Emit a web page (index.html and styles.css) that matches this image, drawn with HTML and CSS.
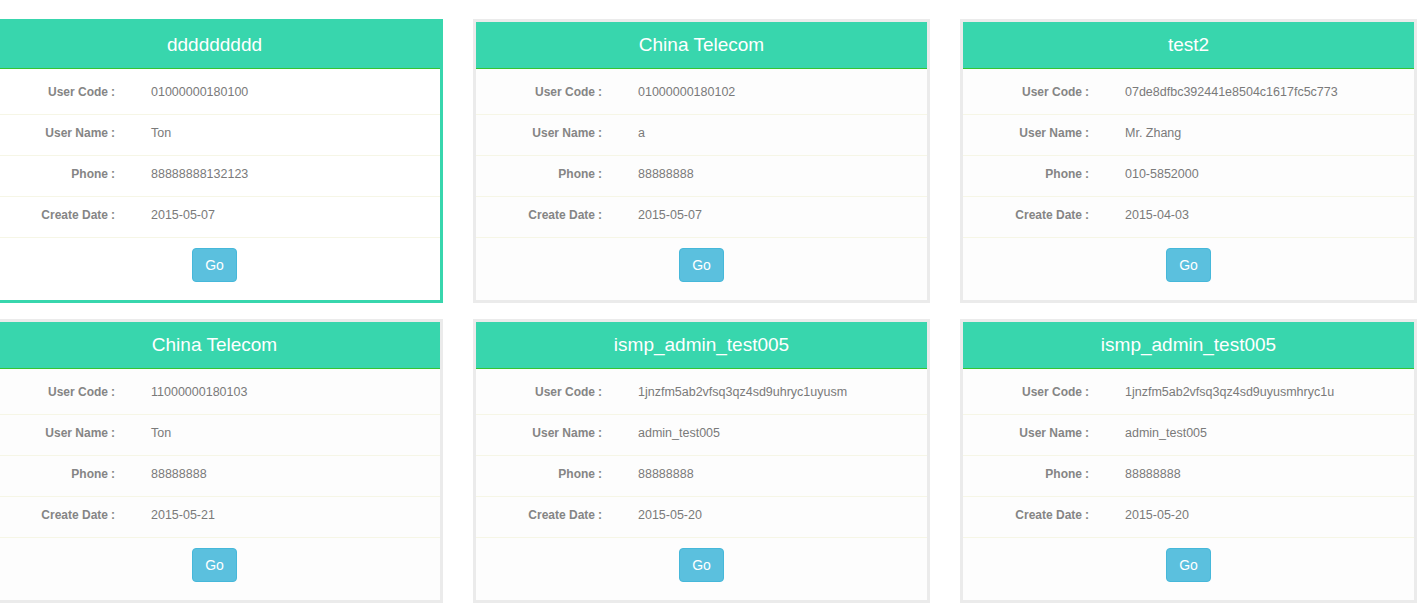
FILE: index.html
```html
<!DOCTYPE html>
<html lang="en">
<head>
<meta charset="utf-8">
<title>Users</title>
<link rel="stylesheet" href="styles.css">
</head>
<body>
<div class="grid">
  <div class="card active">
    <div class="card-head">ddddddddd</div>
    <div class="card-body">
      <div class="row"><span class="label">User Code<span class="colon">:</span></span><span class="value">01000000180100</span></div>
      <div class="row"><span class="label">User Name<span class="colon">:</span></span><span class="value">Ton</span></div>
      <div class="row"><span class="label">Phone<span class="colon">:</span></span><span class="value">88888888132123</span></div>
      <div class="row"><span class="label">Create Date<span class="colon">:</span></span><span class="value">2015-05-07</span></div>
    </div>
    <div class="card-foot"><button class="btn">Go</button></div>
  </div>
  <div class="card">
    <div class="card-head">China Telecom</div>
    <div class="card-body">
      <div class="row"><span class="label">User Code<span class="colon">:</span></span><span class="value">01000000180102</span></div>
      <div class="row"><span class="label">User Name<span class="colon">:</span></span><span class="value">a</span></div>
      <div class="row"><span class="label">Phone<span class="colon">:</span></span><span class="value">88888888</span></div>
      <div class="row"><span class="label">Create Date<span class="colon">:</span></span><span class="value">2015-05-07</span></div>
    </div>
    <div class="card-foot"><button class="btn">Go</button></div>
  </div>
  <div class="card">
    <div class="card-head">test2</div>
    <div class="card-body">
      <div class="row"><span class="label">User Code<span class="colon">:</span></span><span class="value">07de8dfbc392441e8504c1617fc5c773</span></div>
      <div class="row"><span class="label">User Name<span class="colon">:</span></span><span class="value">Mr. Zhang</span></div>
      <div class="row"><span class="label">Phone<span class="colon">:</span></span><span class="value">010-5852000</span></div>
      <div class="row"><span class="label">Create Date<span class="colon">:</span></span><span class="value">2015-04-03</span></div>
    </div>
    <div class="card-foot"><button class="btn">Go</button></div>
  </div>
  <div class="card">
    <div class="card-head">China Telecom</div>
    <div class="card-body">
      <div class="row"><span class="label">User Code<span class="colon">:</span></span><span class="value">11000000180103</span></div>
      <div class="row"><span class="label">User Name<span class="colon">:</span></span><span class="value">Ton</span></div>
      <div class="row"><span class="label">Phone<span class="colon">:</span></span><span class="value">88888888</span></div>
      <div class="row"><span class="label">Create Date<span class="colon">:</span></span><span class="value">2015-05-21</span></div>
    </div>
    <div class="card-foot"><button class="btn">Go</button></div>
  </div>
  <div class="card">
    <div class="card-head">ismp_admin_test005</div>
    <div class="card-body">
      <div class="row"><span class="label">User Code<span class="colon">:</span></span><span class="value">1jnzfm5ab2vfsq3qz4sd9uhryc1uyusm</span></div>
      <div class="row"><span class="label">User Name<span class="colon">:</span></span><span class="value">admin_test005</span></div>
      <div class="row"><span class="label">Phone<span class="colon">:</span></span><span class="value">88888888</span></div>
      <div class="row"><span class="label">Create Date<span class="colon">:</span></span><span class="value">2015-05-20</span></div>
    </div>
    <div class="card-foot"><button class="btn">Go</button></div>
  </div>
  <div class="card">
    <div class="card-head">ismp_admin_test005</div>
    <div class="card-body">
      <div class="row"><span class="label">User Code<span class="colon">:</span></span><span class="value">1jnzfm5ab2vfsq3qz4sd9uyusmhryc1u</span></div>
      <div class="row"><span class="label">User Name<span class="colon">:</span></span><span class="value">admin_test005</span></div>
      <div class="row"><span class="label">Phone<span class="colon">:</span></span><span class="value">88888888</span></div>
      <div class="row"><span class="label">Create Date<span class="colon">:</span></span><span class="value">2015-05-20</span></div>
    </div>
    <div class="card-foot"><button class="btn">Go</button></div>
  </div>
</div>
</body>
</html>
```

FILE: styles.css
```css
html, body {
  margin: 0;
  padding: 0;
  background: #ffffff;
  overflow: hidden;
}
body {
  font-family: "Liberation Sans", Arial, sans-serif;
}
.grid {
  display: grid;
  grid-template-columns: repeat(3, 457px);
  column-gap: 30px;
  row-gap: 16px;
  padding-top: 19px;
  margin-left: -14px;
}
.card {
  border: 3px solid #ebebeb;
  background: #fdfdfd;
}
.card.active {
  border-color: #38d6ad;
  background: #ffffff;
}
.card-head {
  height: 46px;
  line-height: 46px;
  background: #38d6ad;
  border-bottom: 1px solid #33c433;
  color: #ffffff;
  text-align: center;
  font-size: 19px;
}
.card-body {
  padding-top: 5px;
}
.row {
  display: flex;
  align-items: center;
  box-sizing: border-box;
  height: 41px;
  padding-bottom: 4px;
  border-bottom: 1px solid #f6f6e6;
  font-size: 12px;
  line-height: 14px;
}
.label {
  width: 126px;
  flex: none;
  text-align: right;
  font-weight: bold;
  color: #858585;
  padding-right: 36px;
}
.colon {
  margin-left: 3px;
}
.value {
  color: #7a7a7a;
  font-size: 12.5px;
}
.card-foot {
  padding: 10px 0 18px;
  display: flex;
  justify-content: center;
}
.btn {
  height: 34px;
  padding: 0 12px;
  border: 1px solid #46b8da;
  border-radius: 4px;
  background: #5bc0de;
  color: #ffffff;
  font-family: "Liberation Sans", Arial, sans-serif;
  font-size: 14px;
  line-height: 20px;
}
```
